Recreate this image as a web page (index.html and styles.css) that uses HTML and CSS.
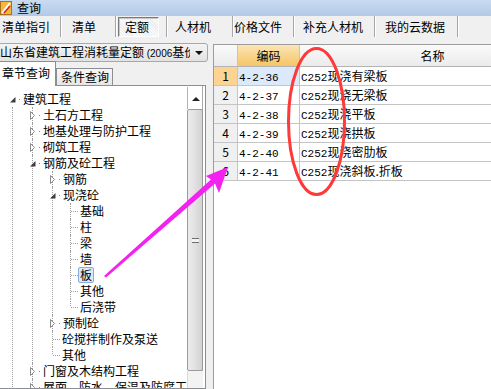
FILE: index.html
```html
<!DOCTYPE html>
<html lang="zh-CN">
<head>
    <meta charset="UTF-8">
    <meta name="viewport" content="width=device-width, initial-scale=1.0">
    <title>查询</title>
    <link rel="stylesheet" href="styles.css">
</head>
<body>
<div class="win">
    <div class="titlebar">
        <svg class="appicon" viewBox="0 0 12 14">
            <rect x="0.5" y="0.5" width="11" height="13" fill="#f3b83f" stroke="#b0701a"/>
            <path d="M2 12 L10 2" stroke="#fff" stroke-width="2"/>
            <path d="M4 12 L10 5" stroke="#d22" stroke-width="1.5"/>
        </svg>
        <span class="title">查询</span>
    </div>

    <div class="toolbar">
        <span class="tb tb1">清单指引</span>
        <span class="tb tb2">清单</span>
        <span class="tb tb3"><span class="pressed">定额</span></span>
        <span class="tb tb4">人材机</span>
        <span class="tb tb5">价格文件</span>
        <span class="tb tb6">补充人材机</span>
        <span class="tb tb7">我的云数据</span>
    </div>

    <div class="main">
        <div class="left">
            <div class="combo">
                <span class="combo-text">山东省建筑工程消耗量定额 <span class="asc">(2006</span>基价)</span>
                <span class="combo-arrow"></span>
            </div>
            <div class="tabs">
                <span class="tab on">章节查询</span>
                <span class="tab">条件查询</span>
            </div>
            <div class="treebox">
                <div class="tree">
                    <ul>
                        <li class="root">
                            <div class="row"><svg class="ex" viewBox="0 0 6 9"><path d="M5.5 2 V7.5 H0 Z" fill="#3c3c3c"/></svg><b class="dot"></b><span class="lbl">建筑工程</span></div>
                            <ul class="sub0">
                                <li><div class="row"><svg class="ex" viewBox="0 0 6 9"><path d="M0.5 0.5 L4.5 4.5 L0.5 8.5 Z" fill="#fff" stroke="#8a8a8a"/></svg><b class="dot"></b><span class="lbl">土石方工程</span></div></li>
                                <li><div class="row"><svg class="ex" viewBox="0 0 6 9"><path d="M0.5 0.5 L4.5 4.5 L0.5 8.5 Z" fill="#fff" stroke="#8a8a8a"/></svg><b class="dot"></b><span class="lbl">地基处理与防护工程</span></div></li>
                                <li><div class="row"><svg class="ex" viewBox="0 0 6 9"><path d="M0.5 0.5 L4.5 4.5 L0.5 8.5 Z" fill="#fff" stroke="#8a8a8a"/></svg><b class="dot"></b><span class="lbl">砌筑工程</span></div></li>
                                <li>
                                    <div class="row"><svg class="ex" viewBox="0 0 6 9"><path d="M5.5 2 V7.5 H0 Z" fill="#3c3c3c"/></svg><b class="dot"></b><span class="lbl">钢筋及砼工程</span></div>
                                    <ul>
                                        <li><div class="row"><svg class="ex" viewBox="0 0 6 9"><path d="M0.5 0.5 L4.5 4.5 L0.5 8.5 Z" fill="#fff" stroke="#8a8a8a"/></svg><b class="dot"></b><span class="lbl">钢筋</span></div></li>
                                        <li>
                                            <div class="row"><svg class="ex" viewBox="0 0 6 9"><path d="M5.5 2 V7.5 H0 Z" fill="#3c3c3c"/></svg><b class="dot"></b><span class="lbl">现浇砼</span></div>
                                            <ul class="lv3">
                                                <li><div class="row"><i class="conn"></i><span class="lbl">基础</span></div></li>
                                                <li><div class="row"><i class="conn"></i><span class="lbl">柱</span></div></li>
                                                <li><div class="row"><i class="conn"></i><span class="lbl">梁</span></div></li>
                                                <li><div class="row"><i class="conn"></i><span class="lbl">墙</span></div></li>
                                                <li><div class="row"><i class="conn"></i><span class="lbl sel">板</span></div></li>
                                                <li><div class="row"><i class="conn"></i><span class="lbl">其他</span></div></li>
                                                <li class="last"><div class="row"><i class="conn"></i><span class="lbl">后浇带</span></div></li>
                                            </ul>
                                        </li>
                                        <li><div class="row"><svg class="ex" viewBox="0 0 6 9"><path d="M0.5 0.5 L4.5 4.5 L0.5 8.5 Z" fill="#fff" stroke="#8a8a8a"/></svg><b class="dot"></b><span class="lbl">预制砼</span></div></li>
                                        <li><div class="row"><i class="conn"></i><span class="lbl">砼搅拌制作及泵送</span></div></li>
                                        <li class="last"><div class="row"><i class="conn"></i><span class="lbl">其他</span></div></li>
                                    </ul>
                                </li>
                                <li><div class="row"><svg class="ex" viewBox="0 0 6 9"><path d="M0.5 0.5 L4.5 4.5 L0.5 8.5 Z" fill="#fff" stroke="#8a8a8a"/></svg><b class="dot"></b><span class="lbl">门窗及木结构工程</span></div></li>
                                <li><div class="row"><svg class="ex" viewBox="0 0 6 9"><path d="M0.5 0.5 L4.5 4.5 L0.5 8.5 Z" fill="#fff" stroke="#8a8a8a"/></svg><b class="dot"></b><span class="lbl">屋面、防水、保温及防腐工程</span></div></li>
                                <li><div class="row"><svg class="ex" viewBox="0 0 6 9"><path d="M0.5 0.5 L4.5 4.5 L0.5 8.5 Z" fill="#fff" stroke="#8a8a8a"/></svg><b class="dot"></b><span class="lbl">金属结构制作工程</span></div></li>
                            </ul>
                        </li>
                    </ul>
                </div>
                <div class="vscroll">
                    <div class="sb-up"><i class="up-arrow"></i></div>
                    <div class="sb-thumb"><i class="grip"></i></div>
                    <div class="sb-track"></div>
                </div>
            </div>
        </div>

        <div class="splitter"></div>

        <div class="grid">
            <div class="gr gh">
                <span class="c cn"></span>
                <span class="c cc hot">编码</span>
                <span class="c cm">名称</span>
            </div>
            <div class="gr cur">
                <span class="c cn">1</span>
                <span class="c cc"><span class="asc">4-2-36</span></span>
                <span class="c cm"><span class="asc">C252</span>现浇有梁板</span>
            </div>
            <div class="gr">
                <span class="c cn">2</span>
                <span class="c cc"><span class="asc">4-2-37</span></span>
                <span class="c cm"><span class="asc">C252</span>现浇无梁板</span>
            </div>
            <div class="gr">
                <span class="c cn">3</span>
                <span class="c cc"><span class="asc">4-2-38</span></span>
                <span class="c cm"><span class="asc">C252</span>现浇平板</span>
            </div>
            <div class="gr">
                <span class="c cn">4</span>
                <span class="c cc"><span class="asc">4-2-39</span></span>
                <span class="c cm"><span class="asc">C252</span>现浇拱板</span>
            </div>
            <div class="gr">
                <span class="c cn">5</span>
                <span class="c cc"><span class="asc">4-2-40</span></span>
                <span class="c cm"><span class="asc">C252</span>现浇密肋板</span>
            </div>
            <div class="gr">
                <span class="c cn">6</span>
                <span class="c cc"><span class="asc">4-2-41</span></span>
                <span class="c cm"><span class="asc">C252</span>现浇斜板.折板</span>
            </div>
        </div>
    </div>

    <!-- hand-drawn marks on top of the screenshot -->
    <svg class="marks" viewBox="0 0 491 389">
        <ellipse cx="316.5" cy="121.5" rx="28" ry="73" fill="none" stroke="#ff3838" stroke-width="3"/>
        <polygon points="228,167 206,176 211,179.5 104,276 106,277.5 215,183.5 219,193" fill="#f422f0"/>
    </svg>
</div>
</body>
</html>
```

FILE: styles.css
```css
/* general styling */
* {
box-sizing: border-box;
margin: 0;
padding: 0;
}

html, body {
width: 491px;
height: 389px;
overflow: hidden;
}

body {
background-color: #f0f0f0;
color: #000;
font-family: "Noto Sans CJK SC", "Noto Sans", sans-serif;
font-size: 12px;
}

.win {
display: flex;
flex-direction: column;
height: 389px;
position: relative;
}

.asc {
font-family: "Liberation Mono", monospace;
font-size: 11px;
}

/* title bar */
.titlebar {
align-items: center;
background: linear-gradient(#c8dbf1, #b2c9e6);
display: flex;
gap: 5px;
height: 16px;
}

.appicon {
height: 14px;
width: 12px;
}

.title {
line-height: 16px;
}

/* toolbar */
.toolbar {
display: flex;
height: 21px;
margin-bottom: 6px;
}

.tb {
align-items: center;
border-right: 1px solid #a6a6a6;
box-shadow: 1px 0 0 #fff;
display: flex;
height: 21px;
line-height: 14px;
margin-right: 1px;
white-space: nowrap;
}

.tb1 { width: 61px; padding-left: 2px; }
.tb2 { width: 54px; padding-left: 10px; }
.tb3 { width: 50px; padding-left: 1px; }
.tb4 { width: 65px; padding-left: 7px; }
.tb5 { width: 60px; padding-left: 0; }
.tb6 { width: 80px; padding-left: 8px; }
.tb7 { width: 82px; padding-left: 9px; }

.pressed {
background: repeating-linear-gradient(45deg, #fbfbfb 0 1px, #ececec 1px 2px);
border: 1px solid;
border-color: #7a7a7a #fff #fff #7a7a7a;
box-shadow: inset 1px 1px 0 #c8c8c8;
height: 20px;
line-height: 17px;
padding-left: 6px;
width: 41px;
}

/* main area */
.main {
display: flex;
flex: 1;
min-height: 0;
}

.left {
display: flex;
flex-direction: column;
flex: none;
width: 206px;
}

.combo {
align-items: center;
background: linear-gradient(#f4f4f4, #e2e2e2);
border: 1px solid #a8a8a8;
border-radius: 3px;
display: flex;
height: 19px;
margin-left: -4px;
padding-left: 3px;
width: 212px;
}

.combo-text {
line-height: 15px;
overflow: hidden;
white-space: nowrap;
width: 190px;
}

.combo-text .asc {
font-family: "Liberation Sans", sans-serif;
font-size: 10px;
}

.combo-arrow {
border-left: 4px solid transparent;
border-right: 4px solid transparent;
border-top: 4px solid #111;
margin-left: 5px;
}

.tabs {
align-items: flex-end;
display: flex;
height: 24px;
margin-bottom: -1px;
}

.tab {
background: linear-gradient(#f7f7f7, #e5e5e5);
border: 1px solid #8c8e94;
border-bottom: 0;
height: 18px;
line-height: 16px;
padding-left: 4px;
width: 57px;
}

.tab.on {
background: #fff;
height: 25px;
line-height: 22px;
margin-left: -1px;
padding-left: 2px;
position: relative;
z-index: 1;
}

.treebox {
background: #fff;
border: 1px solid #8c8e94;
box-shadow: inset -2px 0 0 #fff, inset -3px 0 0 #a9a9a9;
display: flex;
flex: 1;
margin-left: -1px;
min-height: 0;
}

.tree {
flex: 1;
overflow: hidden;
padding-top: 5px;
white-space: nowrap;
}

.tree ul {
list-style: none;
}

.tree li {
border-left: 1px dotted #a0a0a0;
margin-left: 19px;
}

.tree li.root {
border-left: 0;
margin-left: 12px;
padding-left: 1px;
}

.tree ul.lv3 > li {
margin-left: 17px;
}

.tree li.last {
border-left: 0;
padding-left: 1px;
}

.tree li.last > .row {
background: repeating-linear-gradient(#a0a0a0 0 1px, transparent 1px 2px) 0 0 / 1px 8px no-repeat;
margin-left: -1px;
padding-left: 1px;
}

.tree ul.sub0 {
border-left: 1px dotted #a0a0a0;
margin-left: -1px;
}

.row {
align-items: center;
display: flex;
height: 16px;
}

.ex {
flex: none;
height: 9px;
margin-left: -3px;
width: 6px;
}

.dot {
background: #8a8a8a;
flex: none;
height: 1px;
margin-left: 3px;
width: 1px;
}

.conn {
border-top: 1px dotted #a0a0a0;
flex: none;
width: 7px;
}

.lbl {
border: 1px solid transparent;
border-radius: 2px;
line-height: 14px;
margin-left: 1px;
padding: 0 1px;
}

.conn + .lbl {
margin-left: 0;
}

.lbl.sel {
background: #dde9f9;
border-color: #86acdb;
}

/* scrollbar */
.vscroll {
display: flex;
flex-direction: column;
flex: none;
margin-right: 2px;
padding-top: 1px;
width: 16px;
}

.sb-up {
align-items: center;
border-left: 1px solid #b4b4b4;
display: flex;
height: 22px;
justify-content: center;
padding-top: 2px;
}

.up-arrow {
border-bottom: 4px solid #222;
border-left: 4px solid transparent;
border-right: 4px solid transparent;
}

.sb-thumb {
align-items: center;
background: linear-gradient(90deg, #ececec, #e2e2e2 45%, #d3d3d3);
border: 1px solid #9a9a9a;
border-radius: 2px;
display: flex;
height: 262px;
justify-content: center;
}

.grip {
border-bottom: 1px solid #6e6e6e;
border-top: 1px solid #6e6e6e;
box-shadow: inset 0 -2px 0 #f2f2f2, inset 0 2px 0 #f2f2f2;
height: 5px;
width: 7px;
background: linear-gradient(#f2f2f2 0 1px, #6e6e6e 1px 2px, #f2f2f2 2px);
}

.sb-track {
background: #f3f3f3;
border-left: 1px solid #dadada;
flex: 1;
}

.splitter {
flex: none;
width: 7px;
}

/* result grid */
.grid {
background: #fff;
border-left: 1px solid #9c9c9c;
border-top: 1px solid #9c9c9c;
flex: 1;
margin-top: 1px;
min-width: 0;
overflow: hidden;
}

.gr {
border-bottom: 1px solid #c4c4c4;
display: flex;
height: 19px;
line-height: 18px;
width: 360px;
}

.gh {
background: linear-gradient(#fafafa, #ebebeb);
border-bottom-color: #b4b4b4;
height: 22px;
line-height: 21px;
}

.c {
border-right: 1px solid #c4c4c4;
flex: none;
overflow: hidden;
white-space: nowrap;
}

.cn {
background: #f0f0f0;
text-align: center;
width: 24px;
}

.gh .cn {
background: transparent;
}

.cc {
padding-left: 1px;
width: 62px;
}

.cm {
padding-left: 1px;
width: 266px;
}

.gh .cc,
.gh .cm {
padding-left: 0;
text-align: center;
}

.gh .hot {
background: linear-gradient(#fce6b6, #f5c466);
}

.cur .cn {
background: #fcd390;
}

.cur .cc {
background: #dce9fa;
}

/* annotation layer */
.marks {
height: 389px;
left: 0;
pointer-events: none;
position: absolute;
top: 0;
width: 491px;
}
```
